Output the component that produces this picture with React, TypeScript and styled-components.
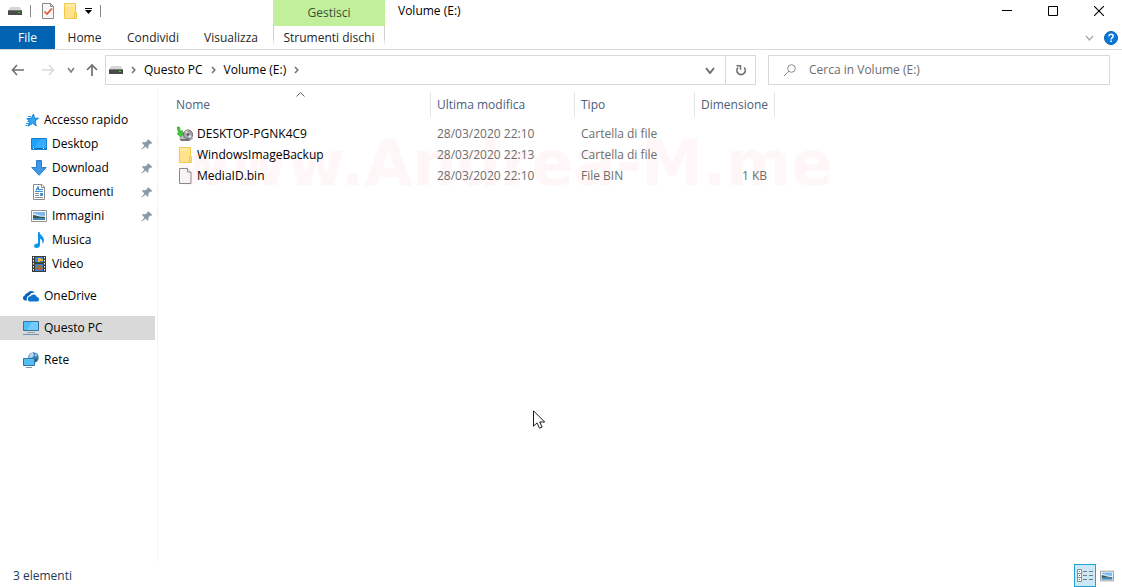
import React from "react";
import styled, { createGlobalStyle } from "styled-components";

const GlobalStyle = createGlobalStyle`
  *, *::before, *::after { box-sizing: border-box; }
  body {
    margin: 0;
    background: #fff;
    color: #000;
    font: 12px/16px "Open Sans", "Noto Sans", sans-serif;
  }
  button, input { font: inherit; color: inherit; }
  button { border: 0; padding: 0; background: none; }
  svg { display: block; flex: none; }
`;

/* ---------- layout ---------- */

const Window = styled.div`
  position: relative;
  display: flex;
  flex-direction: column;
  min-height: 100vh;
  overflow: hidden;
`;

const Header = styled.header`
  display: flex;
  align-items: stretch;
  border-bottom: 1px solid #dadbdc;
`;

const LeftHeader = styled.div`
  display: flex;
  flex-direction: column;
  width: 273px;
`;

const QuickAccess = styled.div`
  display: flex;
  align-items: center;
  height: 26px;
  padding: 0 0 4px 8px;
`;

const QuickButton = styled.button<{ $w: number }>`
  display: flex;
  align-items: center;
  width: ${(p) => p.$w}px;
  height: 22px;
`;

const QuickDivider = styled.span<{ $gap: number }>`
  width: 1px;
  height: 12px;
  margin-right: ${(p) => p.$gap}px;
  background: #8a8a8a;
`;

const Tabs = styled.nav`
  display: flex;
  height: 23px;
`;

const Tab = styled.button<{ $w: number; $primary?: boolean }>`
  width: ${(p) => p.$w}px;
  height: 23px;
  color: ${(p) => (p.$primary ? "#fff" : "#262626")};
  background: ${(p) => (p.$primary ? "#0063b1" : "transparent")};
`;

const ContextGroup = styled.div`
  display: flex;
  flex-direction: column;
  width: 112px;
`;

const ContextTitle = styled.div`
  height: 26px;
  padding-top: 5px;
  text-align: center;
  color: #3d4f33;
  background: #c1ef9b;
`;

const ContextTab = styled.button`
  height: 23px;
  color: #262626;
  border: 1px solid transparent;
  border-width: 0 1px;
  border-image: linear-gradient(#cfcfcf, #cfcfcf 50%, #fff 85%) 1;
`;

const RightHeader = styled.div`
  display: flex;
  flex: 1;
  flex-direction: column;
`;

const TitleRow = styled.div`
  display: flex;
  height: 26px;
  padding-left: 13px;
`;

const Title = styled.h1`
  flex: 1;
  margin: 0;
  padding-top: 3px;
  font-size: 12px;
  font-weight: 400;
`;

const WindowButton = styled.button`
  display: flex;
  align-items: center;
  justify-content: center;
  width: 46px;
  height: 21px;
`;

const RibbonTools = styled.div`
  display: flex;
  align-items: center;
  justify-content: flex-end;
  gap: 10px;
  height: 23px;
  padding-right: 4px;
`;

const Help = styled.button`
  display: flex;
`;

const NavRow = styled.div`
  display: flex;
  align-items: center;
  padding: 5px 12px 5px 11px;
`;

const NavButton = styled.button<{ $w: number }>`
  display: flex;
  align-items: center;
  width: ${(p) => p.$w}px;
  height: 30px;
`;

const Fields = styled.div`
  display: grid;
  flex: 1;
  grid-template-columns: minmax(0, 651fr) minmax(0, 342fr);
  gap: 12px;
`;

const AddressBar = styled.div`
  display: flex;
  align-items: center;
  height: 30px;
  padding-left: 3px;
  border: 1px solid #d9d9d9;
`;

const Crumb = styled.button`
  white-space: nowrap;
`;

const CrumbArrow = styled.span`
  display: flex;
  justify-content: center;
  width: 21px;
`;

const AddressAction = styled.button<{ $divided?: boolean }>`
  display: flex;
  align-items: center;
  justify-content: center;
  width: 30px;
  height: 28px;
  border-left: ${(p) => (p.$divided ? "1px solid #d9d9d9" : "0")};
`;

const Spacer = styled.span`
  flex: 1;
`;

const SearchBox = styled.label`
  display: flex;
  align-items: center;
  gap: 12px;
  height: 30px;
  padding: 0 8px 0 14px;
  border: 1px solid #d9d9d9;
`;

const SearchInput = styled.input`
  flex: 1;
  min-width: 0;
  padding: 0;
  border: 0;
  outline: 0;
  background: none;
  &::placeholder { color: #6d6d6d; opacity: 1; }
`;

const Body = styled.div`
  display: flex;
  flex: 1;
`;

const Sidebar = styled.nav`
  width: 158px;
  padding-right: 2px;
  border-right: 1px solid #f3f3f3;
`;

const Tree = styled.ul`
  margin: 0;
  padding: 18px 0 0;
  list-style: none;
`;

const TreeItem = styled.li<{ $gap?: boolean }>`
  margin-top: ${(p) => (p.$gap ? 8 : 0)}px;
`;

const TreeLink = styled.a<{ $nested?: boolean; $selected?: boolean }>`
  display: flex;
  align-items: center;
  gap: 5px;
  height: 24px;
  padding: 0 2px 0 ${(p) => (p.$nested ? 31 : 23)}px;
  color: #000;
  text-decoration: none;
  background: ${(p) => (p.$selected ? "#d9d9d9" : "transparent")};
`;

const TreeLabel = styled.span`
  flex: 1;
`;

const Content = styled.main`
  position: relative;
  flex: 1;
  padding-top: 2px;
`;

const Watermark = styled.div`
  position: absolute;
  top: 38px;
  left: 15px;
  font: bold 62px/72px "DejaVu Sans", sans-serif;
  color: #fff7f7;
  white-space: nowrap;
  pointer-events: none;
`;

const FileTable = styled.table`
  position: relative;
  width: 617px;
  table-layout: fixed;
  border-collapse: separate;
  border-spacing: 0;
`;

const HeadCell = styled.th<{ $w: number; $first?: boolean }>`
  position: relative;
  width: ${(p) => p.$w}px;
  height: 25px;
  padding: 0 0 0 ${(p) => (p.$first ? 18 : 6)}px;
  border-right: 1px solid #e5e5e5;
  color: #4c607a;
  font-weight: 400;
  text-align: left;
`;

const SortMark = styled.span`
  position: absolute;
  top: 0;
  left: 138px;
`;

const HeadSpace = styled.tr`
  height: 6px;
`;

const Cell = styled.td<{ $right?: boolean }>`
  height: 21px;
  padding: 0 8px 0 6px;
  color: #6d6d6d;
  text-align: ${(p) => (p.$right ? "right" : "left")};
`;

const NameCell = styled.td`
  height: 21px;
  padding: 0 0 0 19px;
`;

const FileName = styled.div`
  display: flex;
  align-items: center;
  gap: 4px;
`;

const IconSlot = styled.span`
  display: flex;
  justify-content: center;
  width: 16px;
`;

const StatusBar = styled.footer`
  display: flex;
  align-items: center;
  height: 25px;
  padding: 2px 4px 0 13px;
  color: #1e395b;
`;

const StatusText = styled.span`
  flex: 1;
`;

const ViewButton = styled.button<{ $active?: boolean }>`
  display: flex;
  align-items: center;
  justify-content: center;
  width: 22px;
  height: 23px;
  border: 1px solid ${(p) => (p.$active ? "#26a0da" : "transparent")};
  background: ${(p) => (p.$active ? "#cbe8f6" : "transparent")};
`;

const Pointer = styled.div`
  position: absolute;
  top: 410px;
  left: 533px;
  pointer-events: none;
`;

/* ---------- icons ---------- */

const DriveIcon = () => (
  <svg width="14" height="8" viewBox="0 0 14 8">
    <path d="M2 0h10l2 4H0z" fill="#d6d6d6" />
    <path d="M0 3h14v5H0z" fill="#4a4a4a" />
    <path d="M0 3h14v1H0z" fill="#777" />
    <path d="M10 5h2v1h-2z" fill="#2be02b" />
  </svg>
);

const CheckDocIcon = () => (
  <svg width="12" height="16" viewBox="0 0 12 16">
    <path d="M.5.5h8l3 3v12H.5z" fill="#f7f7f9" stroke="#8a8a8a" />
    <path d="M8.5.5v3h3" fill="none" stroke="#8a8a8a" />
    <path d="M2.500 8.500l2.500 2.500 5-5.500" fill="none" stroke="#e8562a" strokeWidth="1.700" />
  </svg>
);

const FolderIcon = () => (
  <svg width="13" height="16" viewBox="0 0 13 16">
    <path d="M.5.5h11v9h1v6H.5z" fill="#ffe28a" stroke="#f2c94c" />
    <path d="M10.500 10v5.500" stroke="#edbf3c" />
    <path d="M1 1h10v3H1z" fill="#ffe9a4" />
  </svg>
);

const FileIcon = () => (
  <svg width="13" height="16" viewBox="0 0 13 16">
    <path d="M.5.5h8l3.500 3.500v11.500H.5z" fill="#f8f4f5" stroke="#8f8787" />
    <path d="M8.500.5v3.500H12" fill="#fff" stroke="#8f8787" />
  </svg>
);

const BackupIcon = () => (
  <svg width="16" height="16" viewBox="0 0 16 16">
    <path d="M2 8l3-2h10l1 7-3 2H4z" fill="#b9b9b9" />
    <path d="M2 12l2 3h8l1-2H4z" fill="#747474" />
    <circle cx="11" cy="8.500" r="4.500" fill="#a6a6ac" stroke="#66666b" />
    <path d="M11 8.500L7.500 6a4.200 4.200 0 0 1 3-1.800z" fill="#e6cfc3" />
    <path d="M11 8.500l3.800 1.500a4 4 0 0 1-2.500 2.300z" fill="#dfe5ef" />
    <circle cx="11" cy="8.500" r="1.300" fill="#555" />
    <path d="M0 1l2.500 0 1 5 1.500-2 1 4-2.500 3L0 7.500l1.500-.5z" fill="#3cc936" stroke="#219a20" strokeWidth=".5" />
  </svg>
);

const StarIcon = () => (
  <svg width="16" height="16" viewBox="0 0 16 16">
    <path d="M10.500 2l1 4.300 4-.1-3.500 2.800 1.300 4.800-3.800-2.500-4.300 2.900L6.700 9.500 4 6.600l4.300-.3z" fill="#36a4ee" stroke="#1581d1" />
    <path d="M5 4.500h3M3.500 6.500H5M4.500 9.500H7M3 11.500h3M2.500 13.500h2" stroke="#2a96e4" />
  </svg>
);

const DesktopIcon = () => (
  <svg width="16" height="16" viewBox="0 0 16 16">
    <path d="M.5 2.500h15v11H.5z" fill="#1ea0fb" stroke="#1480cf" />
    <path d="M10 3h5v9H3z" fill="#37adff" />
    <path d="M1 12h14v1H1z" fill="#126dba" />
    <path d="M2 12h1v1H2zM12 12h1v1h-1z" fill="#fff" />
  </svg>
);

const DownloadIcon = () => (
  <svg width="16" height="16" viewBox="0 0 16 16">
    <path d="M5.500.5h5v7h4.700L8 15.300.8 7.500h4.700z" fill="#3f98e6" stroke="#2b7dcb" />
  </svg>
);

const DocumentIcon = () => (
  <svg width="16" height="16" viewBox="0 0 16 16">
    <path d="M2.500.5h8.500l2.500 2.500v12.500h-11z" fill="#fff" stroke="#8a8a8a" />
    <path d="M10.500.5v3h3" fill="none" stroke="#8a8a8a" />
    <path d="M8 5.500h4M4 7.500h8" stroke="#3a8fd6" />
    <path d="M5 6.500l2-4 1 4M5 5h3" fill="none" stroke="#2b7cc2" />
    <path d="M4 9.500h4M4 11.500h4M4 13.500h8" stroke="#8f8f8f" />
    <path d="M9 9h3v3H9z" fill="#4295d8" />
  </svg>
);

const PictureIcon = ({ size = 16 }: { size?: number }) => (
  <svg width={size} height={size} viewBox="0 0 16 16">
    <path d="M.5 2.500h15v11H.5z" fill="#fff" stroke="#949494" />
    <path d="M2 4h12v8H2z" fill="#7db9ee" />
    <path d="M2 5.500c3 0 4 2 12 2.500V10H2z" fill="#dbeefb" />
    <path d="M2 7c3 .2 5 1.800 12 2v1H2z" fill="#35574f" />
    <path d="M2 10h12v2H2z" fill="#3f86b5" />
  </svg>
);

const MusicIcon = () => (
  <svg width="16" height="16" viewBox="0 0 16 16">
    <path d="M7 0h1.500c.5 3.500 4.500 4 4.500 8.200 0 1.700-.7 2.800-1.500 3.800.5-3-.5-4.500-2.500-5.200V13c0 1.700-1.600 3-3.300 3S3 15.200 3 14c0-1.500 2-2.700 4-2.300z" fill="#0c93f0" />
  </svg>
);

const VideoIcon = () => (
  <svg width="16" height="16" viewBox="0 0 16 16">
    <path d="M1 0h14v16H1z" fill="#3c3c3c" />
    <path d="M2.500 1v14M13.500 1v14" stroke="#fff" strokeDasharray="1.500 1.500" />
    <path d="M4 1h8v6H4zM4 8h8v7H4z" fill="#3d7fd6" />
    <path d="M7 2h3v1h2v2H9v1H7z" fill="#e7b93a" />
    <path d="M4 6h8v1H4z" fill="#3d5a35" />
    <path d="M6 9h4v2h2v2H5v-2z" fill="#8b7a45" />
    <path d="M7 13h3v1H7z" fill="#dd5433" />
  </svg>
);

const CloudIcon = () => (
  <svg width="16" height="16" viewBox="0 0 16 16">
    <path d="M4 12.500H2.200a2.500 2.500 0 0 1-.4-4.900A3.200 3.200 0 0 1 4.600 5 4.300 4.300 0 0 1 12 5c-3-.8-4.600.6-5.200 2.200C4.500 7.500 3.300 9.500 4 12.500z" fill="#0a64b8" />
    <path d="M4.600 12.500C3.900 9.600 5 8 7.200 7.700 8 5.600 9.800 4.900 12 5.500" fill="none" stroke="#fff" />
    <path d="M7.500 13.500a2.600 2.600 0 0 1 0-5.200 3.500 3.500 0 0 1 6.400.8 2.200 2.200 0 0 1-.1 4.400z" fill="#0e74cf" />
  </svg>
);

const ComputerIcon = () => (
  <svg width="16" height="16" viewBox="0 0 16 16">
    <path d="M.5 1.500h15v9H.5z" fill="#4cbcfb" stroke="#3c7296" />
    <path d="M9 2h6v8H4z" fill="#72cdff" />
    <path d="M4 12.500h8" stroke="#8da3b3" />
    <path d="M0 14.500h16" stroke="#6f93ad" />
  </svg>
);

const NetworkIcon = () => (
  <svg width="16" height="16" viewBox="0 0 16 16">
    <circle cx="10.500" cy="5.500" r="5.300" fill="#3c86bb" />
    <path d="M7 2l3-1.500 1 3-2 2-3 .5zM12 1.500l2 2-1 1-1-1z" fill="#b9dbef" />
    <path d="M12 7l3-1-1.500 3.500-1.500.5z" fill="#285f8c" />
    <path d="M.5 6.500h11v7H.5z" fill="#55bdf6" stroke="#34749f" />
    <path d="M3 15.500h6" stroke="#7c98ab" />
  </svg>
);

const PinIcon = () => (
  <svg width="12" height="12" viewBox="0 0 12 12">
    <path d="M7 1l4.500 4-1.500.8-1 0-1.700 2 .2 2.200-1 .8L4.500 8.600 1 11.500.5 11l2.900-3.500L1 5l1-1 2.400.3L6.500 2.500z" fill="#8b9aa5" />
  </svg>
);

const BackIcon = () => (
  <svg width="14" height="12" viewBox="0 0 14 12">
    <path d="M6 1L1.500 6 6 11M1.500 6H13" fill="none" stroke="#707070" strokeWidth="1.600" />
  </svg>
);

const ForwardIcon = () => (
  <svg width="14" height="12" viewBox="0 0 14 12">
    <path d="M8 1l4.500 5L8 11M12.500 6H1" fill="none" stroke="#d9d9d9" strokeWidth="1.400" />
  </svg>
);

const UpIcon = () => (
  <svg width="12" height="14" viewBox="0 0 12 14">
    <path d="M1 7l5-5 5 5M6 2v11" fill="none" stroke="#707070" strokeWidth="1.700" />
  </svg>
);

const Chevron = ({ w, h, weight, color }: { w: number; h: number; weight: number; color: string }) => (
  <svg width={w} height={h} viewBox={`0 0 ${w} ${h}`}>
    <path d={`M1 1L${w / 2} ${h - 1}L${w - 1} 1`} fill="none" stroke={color} strokeWidth={weight} />
  </svg>
);

const CrumbChevron = () => (
  <svg width="5" height="8" viewBox="0 0 5 8">
    <path d="M1 1l2.800 3L1 7" fill="none" stroke="#707070" strokeWidth="1.500" />
  </svg>
);

const RefreshIcon = () => (
  <svg width="12" height="12" viewBox="0 0 12 12">
    <path d="M9.200 3.500A4.200 4.200 0 1 1 3 3.500" fill="none" stroke="#707070" strokeWidth="1.700" />
    <path d="M1.500 1.800h4v4" fill="none" stroke="#707070" strokeWidth="1.500" />
  </svg>
);

const SearchIcon = () => (
  <svg width="14" height="14" viewBox="0 0 14 14">
    <circle cx="8.500" cy="5.500" r="3.800" fill="none" stroke="#8c8c8c" />
    <path d="M5.800 8.300L1 13" stroke="#8c8c8c" />
  </svg>
);

const DetailsIcon = () => (
  <svg width="16" height="15" viewBox="0 0 16 15">
    <path d="M.5 1.500h4v4h-4zM.5 5.500h4v4h-4zM.5 9.500h4v4h-4z" fill="#fff" stroke="#8c8c8c" />
    <path d="M2 3h1v1H2z" fill="#4a8f3a" />
    <path d="M2 7h1v1H2z" fill="#2a72d4" />
    <path d="M2 11h1v1H2z" fill="#d8442b" />
    <path d="M6 3.500h4M12 3.500h4M6 7.500h4M12 7.500h4M6 11.500h4M12 11.500h4" stroke="#7b7b7b" />
  </svg>
);

/* ---------- data ---------- */

type Place = {
  label: string;
  icon: React.ReactNode;
  nested?: boolean;
  gap?: boolean;
  pinned?: boolean;
  selected?: boolean;
};

const places: Place[] = [
  { label: "Accesso rapido", icon: <StarIcon /> },
  { label: "Desktop", icon: <DesktopIcon />, nested: true, pinned: true },
  { label: "Download", icon: <DownloadIcon />, nested: true, pinned: true },
  { label: "Documenti", icon: <DocumentIcon />, nested: true, pinned: true },
  { label: "Immagini", icon: <PictureIcon />, nested: true, pinned: true },
  { label: "Musica", icon: <MusicIcon />, nested: true },
  { label: "Video", icon: <VideoIcon />, nested: true },
  { label: "OneDrive", icon: <CloudIcon />, gap: true },
  { label: "Questo PC", icon: <ComputerIcon />, gap: true, selected: true },
  { label: "Rete", icon: <NetworkIcon />, gap: true },
];

const files = [
  { name: "DESKTOP-PGNK4C9", icon: <BackupIcon />, date: "28/03/2020 22:10", type: "Cartella di file", size: "" },
  { name: "WindowsImageBackup", icon: <FolderIcon />, date: "28/03/2020 22:13", type: "Cartella di file", size: "" },
  { name: "MediaID.bin", icon: <FileIcon />, date: "28/03/2020 22:10", type: "File BIN", size: "1 KB" },
];

export default function App() {
  return (
    <Window>
      <GlobalStyle />
      <Header>
        <LeftHeader>
          <QuickAccess>
            <QuickButton $w={22} aria-label="Volume"><DriveIcon /></QuickButton>
            <QuickDivider $gap={11} />
            <QuickButton $w={22} aria-label="Proprietà"><CheckDocIcon /></QuickButton>
            <QuickButton $w={21} aria-label="Nuova cartella"><FolderIcon /></QuickButton>
            <QuickButton $w={15} aria-label="Personalizza">
              <svg width="7" height="6" viewBox="0 0 7 6">
                <path d="M0 0h7v1H0zM0 2h7L3.500 6z" fill="#000" />
              </svg>
            </QuickButton>
            <QuickDivider $gap={0} />
          </QuickAccess>
          <Tabs>
            <Tab $w={55} $primary>File</Tab>
            <Tab $w={59}>Home</Tab>
            <Tab $w={78}>Condividi</Tab>
            <Tab $w={78}>Visualizza</Tab>
          </Tabs>
        </LeftHeader>
        <ContextGroup>
          <ContextTitle>Gestisci</ContextTitle>
          <ContextTab>Strumenti dischi</ContextTab>
        </ContextGroup>
        <RightHeader>
          <TitleRow>
            <Title>Volume (E:)</Title>
            <WindowButton aria-label="Riduci a icona">
              <svg width="10" height="1" viewBox="0 0 10 1"><path d="M0 0h10v1H0z" /></svg>
            </WindowButton>
            <WindowButton aria-label="Ingrandisci">
              <svg width="10" height="10" viewBox="0 0 10 10"><path d="M.5.5h9v9h-9z" fill="none" stroke="#000" /></svg>
            </WindowButton>
            <WindowButton aria-label="Chiudi">
              <svg width="10" height="10" viewBox="0 0 10 10"><path d="M0 0l10 10M10 0L0 10" stroke="#000" strokeWidth="1.100" /></svg>
            </WindowButton>
          </TitleRow>
          <RibbonTools>
            <Help aria-label="Espandi barra multifunzione"><Chevron w={9} h={6} weight={1.3} color="#a5a5a5" /></Help>
            <Help aria-label="Guida">
              <svg width="14" height="14" viewBox="0 0 14 14">
                <circle cx="7" cy="7" r="6.500" fill="#0a78d6" stroke="#0560b0" />
                <path d="M5 5.200c0-2.600 4.200-2.400 4.200-.1C9.200 6.600 7.100 6.600 7.100 8.500" fill="none" stroke="#fff" strokeWidth="1.500" />
                <path d="M6.300 9.600h1.600v1.500H6.300z" fill="#fff" />
              </svg>
            </Help>
          </RibbonTools>
        </RightHeader>
      </Header>

      <NavRow>
        <NavButton $w={30} aria-label="Indietro"><BackIcon /></NavButton>
        <NavButton $w={26} aria-label="Avanti"><ForwardIcon /></NavButton>
        <NavButton $w={19} aria-label="Percorsi recenti"><Chevron w={8} h={6} weight={1.6} color="#808080" /></NavButton>
        <NavButton $w={19} aria-label="Su"><UpIcon /></NavButton>
        <Fields>
          <AddressBar>
            <DriveIcon />
            <CrumbArrow><CrumbChevron /></CrumbArrow>
            <Crumb>Questo PC</Crumb>
            <CrumbArrow><CrumbChevron /></CrumbArrow>
            <Crumb>Volume (E:)</Crumb>
            <CrumbArrow><CrumbChevron /></CrumbArrow>
            <Spacer />
            <AddressAction aria-label="Percorsi precedenti"><Chevron w={10} h={7} weight={2} color="#707070" /></AddressAction>
            <AddressAction $divided aria-label="Aggiorna"><RefreshIcon /></AddressAction>
          </AddressBar>
          <SearchBox>
            <SearchIcon />
            <SearchInput type="text" aria-label="Cerca in Volume (E:)" placeholder="Cerca in Volume (E:)" />
          </SearchBox>
        </Fields>
      </NavRow>

      <Body>
        <Sidebar>
          <Tree>
            {places.map((p) => (
              <TreeItem key={p.label} $gap={p.gap}>
                <TreeLink href="#" $nested={p.nested} $selected={p.selected}>
                  {p.icon}
                  <TreeLabel>{p.label}</TreeLabel>
                  {p.pinned && <PinIcon />}
                </TreeLink>
              </TreeItem>
            ))}
          </Tree>
        </Sidebar>
        <Content>
          <Watermark aria-hidden="true">www.Andrea-M.me</Watermark>
          <FileTable>
            <thead>
              <tr>
                <HeadCell $w={273} $first scope="col">
                  Nome
                  <SortMark>
                    <svg width="9" height="5" viewBox="0 0 9 5">
                      <path d="M.5 4.500l4-4 4 4" fill="none" stroke="#5c5c5c" />
                    </svg>
                  </SortMark>
                </HeadCell>
                <HeadCell $w={144} scope="col">Ultima modifica</HeadCell>
                <HeadCell $w={120} scope="col">Tipo</HeadCell>
                <HeadCell $w={80} scope="col">Dimensione</HeadCell>
              </tr>
            </thead>
            <tbody>
              <HeadSpace aria-hidden="true" />
              {files.map((f) => (
                <tr key={f.name}>
                  <NameCell>
                    <FileName><IconSlot>{f.icon}</IconSlot>{f.name}</FileName>
                  </NameCell>
                  <Cell>{f.date}</Cell>
                  <Cell>{f.type}</Cell>
                  <Cell $right>{f.size}</Cell>
                </tr>
              ))}
            </tbody>
          </FileTable>
        </Content>
      </Body>

      <StatusBar>
        <StatusText>3 elementi</StatusText>
        <ViewButton $active aria-label="Dettagli"><DetailsIcon /></ViewButton>
        <ViewButton aria-label="Icone grandi"><PictureIcon size={14} /></ViewButton>
      </StatusBar>

      <Pointer aria-hidden="true">
        <svg width="13" height="20" viewBox="0 0 13 20">
          <path d="M.5.8v15.400l3.500-3.300 2.500 5.300 2.600-1.200-2.400-5h5z" fill="#fff" stroke="#1a1a22" />
        </svg>
      </Pointer>
    </Window>
  );
}
